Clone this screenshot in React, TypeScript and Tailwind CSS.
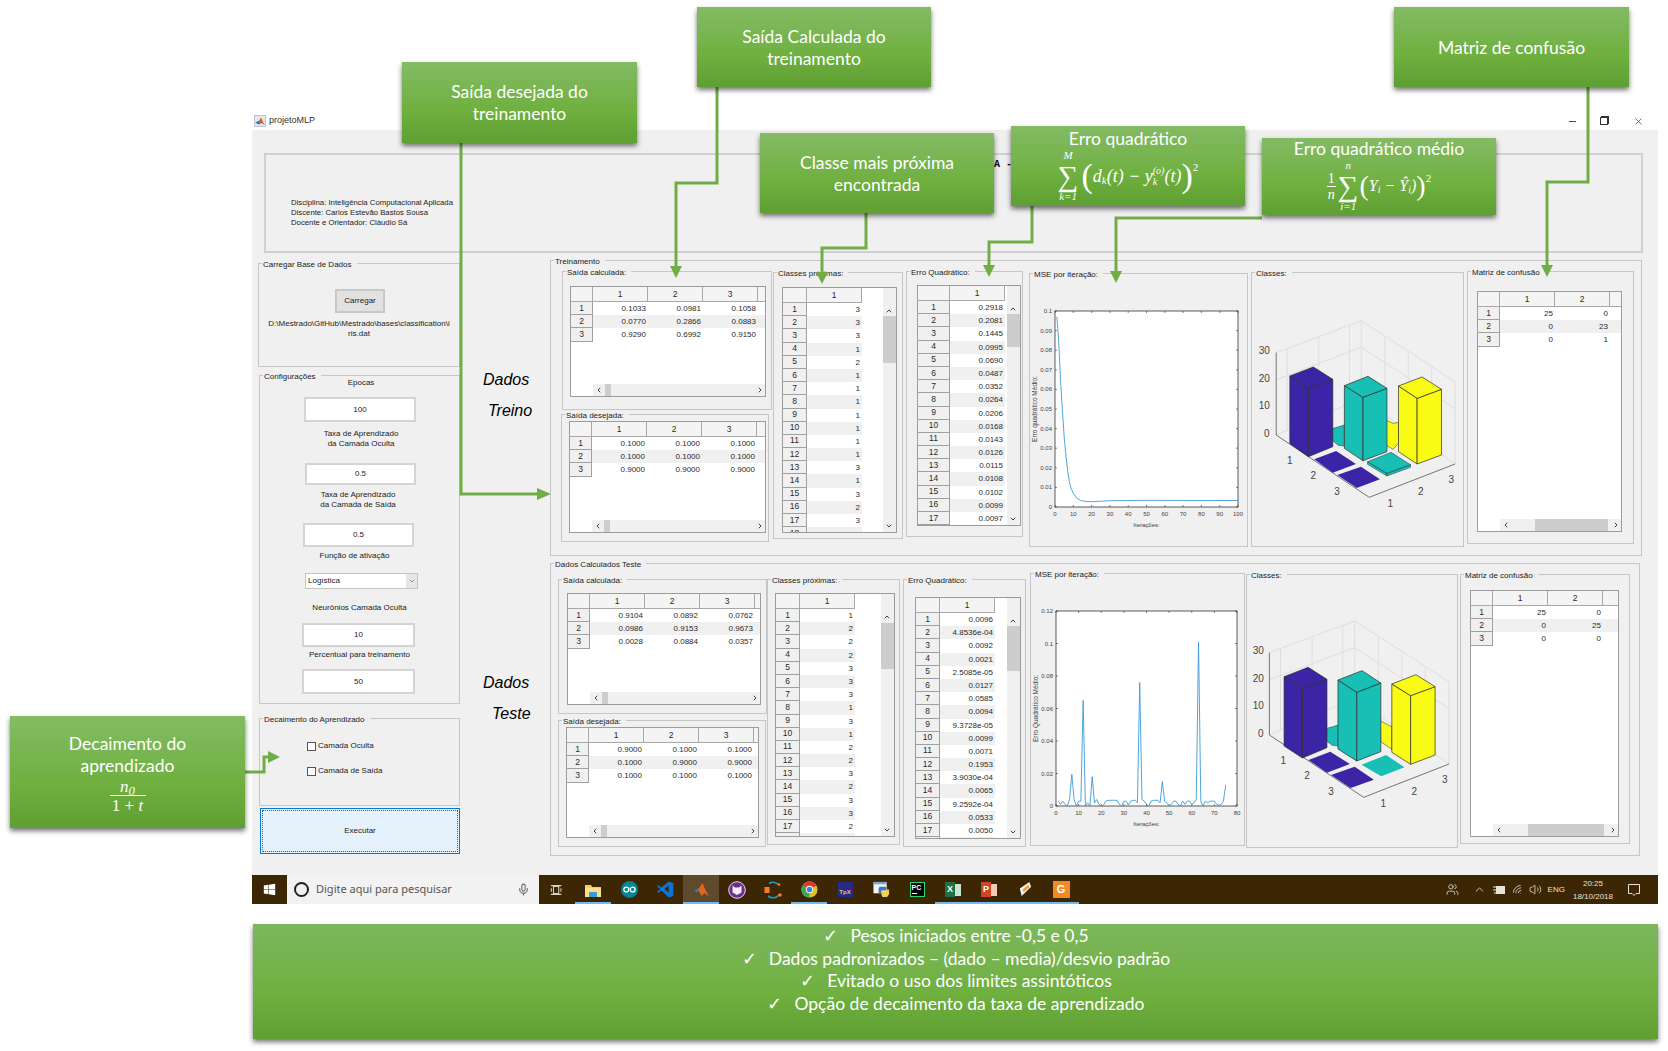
import type { ReactNode } from 'react';
import { ChevronDown, ChevronLeft, ChevronRight, ChevronUp, Mic, Minus, Users, Volume2, Wifi, X } from 'lucide-react';
import { FaWindows } from 'react-icons/fa';

function Group({ title, className = '', children }: { title: string; className?: string; children?: ReactNode }) {
  return (
    <div className={`relative shrink-0 border border-[#c6c6c6] ${className}`}>
      <span className="absolute -top-[4px] left-[3px] bg-[#f0f0f0] pl-px pr-[5px] text-[8px] leading-[10px] whitespace-nowrap text-[#222]">
        {title}
      </span>
      {children}
    </div>
  );
}

type TableProps = {
  className: string;
  headWidth: number;
  cols: number;
  rows: string[][];
  hThumb?: [number, number];
  vThumb?: [number, number];
};

function DataTable({ className, headWidth, cols, rows, hThumb, vThumb }: TableProps) {
  return (
    <div className={`relative overflow-hidden border border-[#9c9c9c] bg-white text-[8px] text-[#2a2a2a] ${className}`}>
      <div className="flex h-[15px] text-[8.5px]">
        <div className="shrink-0 border-r border-b border-[#a8a8a8] bg-[#f4f4f4]" style={{ width: headWidth }} />
        {Array.from({ length: cols }, (_, i) => (
          <div key={i} className="flex w-[55px] shrink-0 items-center justify-center border-r border-b border-[#a8a8a8] bg-[#f4f4f4]">
            {i + 1}
          </div>
        ))}
        {!vThumb && <div className="flex-1 border-b border-[#a8a8a8] bg-[#f4f4f4]" />}
      </div>
      {rows.map((row, r) => (
        <div key={r} className={`flex h-[13.2px] leading-[13px] ${r % 2 === 1 && !vThumb ? 'bg-[#f0f0f0]' : ''}`}>
          <div
            className="flex shrink-0 items-center justify-center border-r border-b border-[#a0a0a0] bg-[#f0f0f0] text-[8.5px]"
            style={{ width: headWidth }}
          >
            {r + 1}
          </div>
          {row.map((v, c) => (
            <div key={c} className={`w-[55px] shrink-0 pr-[2px] text-right ${r % 2 === 1 ? 'bg-[#f0f0f0]' : ''}`}>
              {v}
            </div>
          ))}
        </div>
      ))}
      {hThumb && (
        <div className="absolute right-0 bottom-0 flex h-[12px] items-center bg-[#f0f0f0]" style={{ left: headWidth }}>
          <ChevronLeft className="absolute left-[2px] size-[8px] text-[#444]" strokeWidth={3} />
          <div className="absolute inset-y-0 bg-[#cdcdcd]" style={{ left: hThumb[0], width: hThumb[1] }} />
          <ChevronRight className="absolute right-[1px] size-[8px] text-[#444]" strokeWidth={3} />
        </div>
      )}
      {vThumb && (
        <div className="absolute top-0 right-0 bottom-0 w-[13px] bg-[#f0f0f0]">
          <ChevronUp className="absolute top-[19px] left-[2px] size-[8px] text-[#444]" strokeWidth={3} />
          <div className="absolute inset-x-0 bg-[#cdcdcd]" style={{ top: vThumb[0], height: vThumb[1] }} />
          <ChevronDown className="absolute bottom-[2px] left-[2px] size-[8px] text-[#444]" strokeWidth={3} />
        </div>
      )}
    </div>
  );
}

function Value({ value, className }: { value: string; className: string }) {
  return (
    <div className={`flex items-center justify-center border-2 border-[#d4d4d4] bg-white text-[8px] text-[#222] ${className}`}>
      {value}
    </div>
  );
}

function Label({ children, className = '' }: { children: ReactNode; className?: string }) {
  return <div className={`text-center text-[8px] leading-[10px] text-[#222] ${className}`}>{children}</div>;
}

type PlotProps = {
  box: [number, number, number, number];
  xMax: number;
  yMax: number;
  yStep: number;
  data: [number, number][];
  title: string;
};

function Plot({ box, xMax, yMax, yStep, data, title }: PlotProps) {
  const [x0, x1, y0, y1] = box;
  const px = (v: number) => x0 + (v / xMax) * (x1 - x0);
  const py = (v: number) => y1 - (v / yMax) * (y1 - y0);
  const xTicks: number[] = [];
  for (let v = 0; v <= xMax + 0.001; v += 10) xTicks.push(v);
  const yTicks: number[] = [];
  for (let i = 0; i <= Math.round(yMax / yStep); i++) yTicks.push(i * yStep);
  return (
    <svg className="block h-full w-full" fill="#444" fontSize="6">
      <rect x={x0} y={y0} width={x1 - x0} height={y1 - y0} fill="#fff" stroke="#333" strokeWidth="0.8" />
      {xTicks.map((v) => (
        <g key={v}>
          <path d={`M${px(v)} ${y1}v-2M${px(v)} ${y0}v2`} stroke="#333" strokeWidth="0.6" />
          <text x={px(v)} y={y1 + 9} textAnchor="middle">
            {v}
          </text>
        </g>
      ))}
      {yTicks.map((v) => (
        <g key={v}>
          <path d={`M${x0} ${py(v)}h2M${x1} ${py(v)}h-2`} stroke="#333" strokeWidth="0.6" />
          <text x={x0 - 3} y={py(v) + 2} textAnchor="end">
            {Number(v.toFixed(2)).toString()}
          </text>
        </g>
      ))}
      <polyline
        points={data.map(([a, b]) => `${px(a)},${py(b)}`).join(' ')}
        fill="none"
        stroke="#3d9ad8"
        strokeWidth="0.9"
      />
      <text x={(x0 + x1) / 2} y={y1 + 20} textAnchor="middle">
        Iterações:
      </text>
      <text transform={`translate(7 ${(y0 + y1) / 2}) rotate(-90)`} textAnchor="middle" fontSize="6.5">
        {title}
      </text>
    </svg>
  );
}

type BarDef = { color: string; top: number[]; low: number[] };
type ChartProps = {
  sx: number;
  ox: number;
  oy: number;
  corners: number[];
  behind: { color: string; pts: number[] }[];
  flats: { color: string; pts: number[]; side?: number }[];
  bars: BarDef[];
  labels: [string, number, number][];
};

// the numbers are read off the 3x crops, then scaled back down
function BarChart({ sx, ox, oy, corners, behind, flats, bars, labels }: ChartProps) {
  const mapPts = (p: number[]) => {
    const out: string[] = [];
    for (let i = 0; i < p.length; i += 2) out.push(`${p[i] / sx + ox},${p[i + 1] / 3 + oy}`);
    return out.join(' ');
  };
  const [lx, ly, bx, by, rx, ry] = corners;
  const step = 83;
  const grid = '#dedede';
  const stroke = '#2c2c2c';
  const wallX = [0.13, 0.5, 0.86];
  return (
    <svg className="block h-full w-full" fontSize="10" fill="#444">
      <polyline points={mapPts([lx, ly - 3 * step + 2, bx, by, rx, ry])} fill="none" stroke={grid} />
      <polyline points={mapPts([lx, ly - 2 * step, bx, by + 80, rx, ry + 80])} fill="none" stroke={grid} />
      <polyline points={mapPts([lx, ly, bx, by + 233, rx, ry + 247])} fill="none" stroke={grid} />
      {wallX.map((t) => (
        <polyline
          key={t}
          points={mapPts([lx + (bx - lx) * t, ly - 3 * step + 2 + (by - ly + 3 * step - 2) * t, lx + (bx - lx) * t, ly + (by + 233 - ly) * t])}
          stroke={grid}
        />
      ))}
      {[0.25, 0.5, 0.75].map((t) => (
        <polyline
          key={t}
          points={mapPts([bx + (rx - bx) * t, by + (ry - by) * t, bx + (rx - bx) * t, by + 233 + (ry + 14 - by) * t])}
          stroke={grid}
        />
      ))}
      <polyline points={mapPts([bx, by, bx, by + 233])} stroke={grid} />
      <polyline points={mapPts([rx, ry, rx, ry + 247])} stroke={grid} />
      <polyline
        points={mapPts([lx, ly - 3 * step + 2, lx, ly, corners[6], corners[7], rx, ry + 247])}
        fill="none"
        stroke="#555"
        strokeWidth="0.8"
      />
      {behind.map((b, i) => (
        <polygon key={i} points={mapPts(b.pts)} fill={b.color} stroke={stroke} strokeWidth="0.5" />
      ))}
      {flats.map((f, i) => (
        <g key={i}>
          {f.side && (
            <>
              <polygon
                points={mapPts([f.pts[0], f.pts[1], f.pts[6], f.pts[7], f.pts[6], f.pts[7] + f.side, f.pts[0], f.pts[1] + f.side])}
                fill={f.color}
                stroke={stroke}
                strokeWidth="0.5"
              />
              <polygon
                points={mapPts([f.pts[6], f.pts[7], f.pts[4], f.pts[5], f.pts[4], f.pts[5] + f.side, f.pts[6], f.pts[7] + f.side])}
                fill={f.color}
                stroke={stroke}
                strokeWidth="0.5"
              />
            </>
          )}
          <polygon points={mapPts(f.pts)} fill={f.color} stroke={f.side ? stroke : 'none'} strokeWidth="0.5" />
        </g>
      ))}
      {bars.map((b, i) => {
        const [ax, ay, bbx, bby, cx, cy, dx, dy] = b.top;
        const [e, f, g, h, j, k] = b.low;
        return (
          <g key={i} fill={b.color} stroke={stroke} strokeWidth="0.7" strokeLinejoin="round">
            <polygon points={mapPts([ax, ay, dx, dy, g, h, e, f])} />
            <polygon points={mapPts([dx, dy, cx, cy, j, k, g, h])} />
            <polygon points={mapPts([ax, ay, bbx, bby, cx, cy, dx, dy])} />
          </g>
        );
      })}
      {labels.map(([t, x, y], i) => (
        <text key={i} x={x / sx + ox} y={y / 3 + oy + 3.5} textAnchor="middle">
          {t}
        </text>
      ))}
    </svg>
  );
}

function Callout({ className, children }: { className: string; children: ReactNode }) {
  return (
    <div
      className={`absolute z-30 flex flex-col items-center bg-linear-to-b from-[#84bb64] via-[#6fb03f] via-60% to-[#5f9f33] text-center font-['Lato',sans-serif] text-[17.5px] leading-[22px] text-white shadow-[0_3px_5px_rgba(0,0,0,0.55)] ${className}`}
    >
      {children}
    </div>
  );
}

function Sum({ top, bottom }: { top: string; bottom: string }) {
  return (
    <span className="flex flex-col items-center font-['Liberation_Serif',serif] italic">
      <span className="h-[11px] text-[11px] leading-[10px]">{top}</span>
      <span className="flex h-[30px] items-center text-[29px] leading-none not-italic">∑</span>
      <span className="h-[11px] text-[11px] leading-[11px]">{bottom}</span>
    </span>
  );
}

function Arrows() {
  const lines = [
    '461,143 461,494 538,494',
    '717,87 717,183 676,183 676,267',
    '866,213 866,248 822,248 822,272',
    '1032,206 1032,242 989,242 989,266',
    '1262,218 1116,218 1116,272',
    '1588,87 1588,182 1547,182 1547,266',
    '245,772 264,772 264,757 269,757',
  ];
  const heads = [
    '537,488 551,494 537,500',
    '670,266 682,266 676,278',
    '816,272 828,272 822,284',
    '983,265 995,265 989,277',
    '1110,271 1122,271 1116,283',
    '1541,265 1553,265 1547,277',
    '268,751 280,757 268,763',
  ];
  return (
    <svg className="pointer-events-none absolute inset-0 z-20 h-full w-full">
      {lines.map((p) => (
        <polyline key={p} points={p} fill="none" stroke="#70ad47" strokeWidth="3" />
      ))}
      {heads.map((p) => (
        <polygon key={p} points={p} fill="#70ad47" />
      ))}
    </svg>
  );
}

function TitleIcon() {
  return (
    <svg viewBox="0 0 12 12" className="size-[12px]">
      <rect x="0.5" y="0.5" width="11" height="11" fill="#dfe7f2" stroke="#9aa6b8" strokeWidth="0.6" />
      <path d="M1.5 7.5 5 6 7 2.5 9 7 10.5 10 7.5 8 5 9.5Z" fill="#d4601d" />
      <path d="M1.5 7.5 5 6 5 9.5Z" fill="#2f6fb5" />
    </svg>
  );
}

function TrayIcons() {
  return (
    <div className="ml-auto flex h-full items-center pr-[17px] text-[#e8e2d8]">
      <Users className="mr-[14px] size-[13px]" strokeWidth={1.5} />
      <ChevronUp className="mr-[6px] size-[13px]" strokeWidth={1.5} />
      <svg viewBox="0 0 14 10" className="mr-[6px] h-[10px] w-[14px]" fill="none" stroke="currentColor">
        <rect x="4.5" y="1.5" width="8" height="7" fill="currentColor" />
        <path d="M1 2h3M1 5h3M2 8h2" />
      </svg>
      <Wifi className="mr-[5px] size-[12px] -rotate-45" strokeWidth={1.5} />
      <Volume2 className="mr-[6px] size-[13px]" strokeWidth={1.5} />
      <span className="mr-[8px] text-[8px]">ENG</span>
      <div className="mr-[14px] flex flex-col items-center text-[8px] leading-[13px]">
        <span>20:25</span>
        <span>18/10/2018</span>
      </div>
      <svg viewBox="0 0 14 14" className="size-[14px]" fill="none" stroke="currentColor">
        <path d="M1.5 1.5h11v9H9L7 12.5 5 10.5H1.5Z" />
      </svg>
    </div>
  );
}

const taskIcons: { key: string; on?: boolean; active?: boolean; icon: ReactNode }[] = [
  {
    key: 'view',
    icon: (
      <svg viewBox="0 0 16 16" className="size-[14px]" fill="none" stroke="#d8d2c6" strokeWidth="1.2">
        <rect x="4" y="4" width="6" height="8" />
        <path d="M1 3h12M1 13h12M1.5 6v4M12.5 6v4" />
      </svg>
    ),
  },
  {
    key: 'folder',
    on: true,
    icon: (
      <svg viewBox="0 0 16 16" className="size-[16px]">
        <path d="M0 3h6l1 2h9v10H0Z" fill="#f5cf64" />
        <path d="M0 6h16v9H0Z" fill="#fbe08a" />
        <path d="M4 10h8v5H4Z" fill="#3b9bd8" />
      </svg>
    ),
  },
  {
    key: 'arduino',
    icon: (
      <svg viewBox="0 0 16 16" className="size-[17px]">
        <circle cx="8" cy="8" r="8" fill="#00879a" />
        <circle cx="5" cy="8" r="2.3" fill="none" stroke="#fff" strokeWidth="1.2" />
        <circle cx="11" cy="8" r="2.3" fill="none" stroke="#fff" strokeWidth="1.2" />
      </svg>
    ),
  },
  {
    key: 'vscode',
    icon: (
      <svg viewBox="0 0 16 16" className="size-[17px]">
        <path d="M11 0.5 15.5 2v12L11 15.5 4 9l-2.5 2L0 10l3-2.5L0 5l1.5-1L4 6ZM11 4.5 7 7.5l4 3Z" fill="#0a74d1" />
      </svg>
    ),
  },
  {
    key: 'matlab',
    on: true,
    active: true,
    icon: (
      <svg viewBox="0 0 16 16" className="size-[15px]">
        <path d="M0 9 5 7 9 1l4 9 3 5-5-3-3 3-3-6Z" fill="#e2651e" />
        <path d="M0 9 5 7 5 9.5 3 11Z" fill="#2f7fc4" />
      </svg>
    ),
  },
  {
    key: 'cat',
    icon: (
      <svg viewBox="0 0 18 18" className="size-[18px]">
        <circle cx="9" cy="9" r="8.3" fill="#6c2d91" stroke="#e4dcea" strokeWidth="1" />
        <path d="M4.5 4.5 7 6.5h4l2.5-2v7L9 14l-4.5-2.5Z" fill="#f2ecf6" />
      </svg>
    ),
  },
  {
    key: 'ring',
    icon: (
      <svg viewBox="0 0 18 18" className="size-[18px]">
        <path d="M5 2.5A8 8 0 0 1 15 4M15 14A8 8 0 0 1 4 15" fill="none" stroke="#18a2c9" strokeWidth="1.6" />
        <rect x="0.5" y="6" width="5" height="6" fill="#f27d21" />
        <circle cx="16" cy="14" r="1.8" fill="#f27d21" />
        <circle cx="15" cy="3.5" r="1.3" fill="#f27d21" />
      </svg>
    ),
  },
  {
    key: 'chrome',
    on: true,
    icon: (
      <svg viewBox="0 0 18 18" className="size-[17px]">
        <circle cx="9" cy="9" r="8.5" fill="#e2c21c" />
        <path d="M9 9 1.6 4.7A8.5 8.5 0 0 1 16.4 4.7Z" fill="#d93a2f" />
        <path d="M9 9 1.6 4.7A8.5 8.5 0 0 0 9 17.5Z" fill="#3aa655" />
        <circle cx="9" cy="9" r="3.9" fill="#fff" />
        <circle cx="9" cy="9" r="3" fill="#3d7fe0" />
      </svg>
    ),
  },
  {
    key: 'tex',
    icon: (
      <div className="flex size-[15px] items-end justify-center bg-[#262a86] text-[6px] leading-[9px] font-bold text-[#e6c94e]">TpX</div>
    ),
  },
  {
    key: 'python',
    icon: (
      <svg viewBox="0 0 18 18" className="size-[17px]">
        <rect x="0.5" y="1" width="14" height="12" fill="#f4f4f4" />
        <rect x="0.5" y="1" width="14" height="2.5" fill="#7ba7d8" />
        <path d="M7 6h7v4H9v3H6V8Z" fill="#3b78ad" />
        <path d="M9 11h5V9h3v5l-2 3h-5l-1-2Z" fill="#f4cf45" />
      </svg>
    ),
  },
  {
    key: 'pycharm',
    icon: (
      <div className="flex size-[15px] flex-col border border-[#2dd47f] bg-black text-[7px] leading-[9px] font-bold text-white">
        <span className="pl-px">PC</span>
        <span className="mt-px ml-px h-px w-[5px] bg-white" />
      </div>
    ),
  },
  {
    key: 'excel',
    on: true,
    icon: (
      <div className="flex h-[15px] w-[16px] items-center">
        <span className="flex h-[15px] w-[10px] items-center justify-center bg-[#1d7245] text-[9px] font-bold text-white">X</span>
        <span className="h-[12px] w-[6px] bg-[#c9e3d4]" />
      </div>
    ),
  },
  {
    key: 'ppt',
    on: true,
    icon: (
      <div className="flex h-[15px] w-[16px] items-center">
        <span className="flex h-[15px] w-[10px] items-center justify-center bg-[#cf4526] text-[9px] font-bold text-white">P</span>
        <span className="h-[12px] w-[6px] bg-[#f3c9bb]" />
      </div>
    ),
  },
  {
    key: 'subl',
    on: true,
    icon: (
      <svg viewBox="0 0 18 18" className="size-[17px]">
        <path d="M3 8 13 1l2 5L5 16Z" fill="#f4f4f4" />
        <path d="M6 9l6-5 1 3-6 5Z" fill="#f29b32" />
      </svg>
    ),
  },
  {
    key: 'pdf',
    on: true,
    icon: (
      <div className="flex size-[17px] items-center justify-center bg-[#f08a24] text-[11px] leading-none font-bold text-white">G</div>
    ),
  },
];

function Taskbar() {
  return (
    <div className="flex h-[29px] bg-[#3c2603]">
      <div className="flex w-[35px] items-center justify-center">
        <FaWindows className="size-[13px] text-white" />
      </div>
      <div className="flex w-[252px] items-center bg-[#f2f2f2] font-['Noto_Sans',sans-serif] text-[11px] text-[#555]">
        <span className="ml-[7px] size-[15px] rounded-full border-[2.5px] border-[#222]" />
        <span className="ml-[7px]">Digite aqui para pesquisar</span>
        <Mic className="mr-[9px] ml-auto size-[13px] text-[#666]" />
      </div>
      {taskIcons.map((t) => (
        <div
          key={t.key}
          className={`flex w-[36px] items-center justify-center border-b-2 pt-[2px] ${t.on ? 'border-[#76b9ed]' : 'border-transparent'} ${t.active ? 'bg-[#5f4a2e]' : ''}`}
        >
          {t.icon}
        </div>
      ))}
      <TrayIcons />
    </div>
  );
}

const trainRows = {
  calc: [['0.1033', '0.0981', '0.1058'], ['0.0770', '0.2866', '0.0883'], ['0.9290', '0.6992', '0.9150']],
  want: [['0.1000', '0.1000', '0.1000'], ['0.1000', '0.1000', '0.1000'], ['0.9000', '0.9000', '0.9000']],
  classes: '3 3 3 1 2 1 1 1 1 1 1 1 3 1 3 2 3'.split(' ').map((v) => [v]),
  err: '0.2918 0.2081 0.1445 0.0995 0.0690 0.0487 0.0352 0.0264 0.0206 0.0168 0.0143 0.0126 0.0115 0.0108 0.0102 0.0099 0.0097'
    .split(' ')
    .map((v) => [v]),
  conf: [['25', '0'], ['0', '23'], ['0', '1']],
};

const testRows = {
  calc: [['0.9104', '0.0892', '0.0762'], ['0.0986', '0.9153', '0.9673'], ['0.0028', '0.0884', '0.0357']],
  want: [['0.9000', '0.1000', '0.1000'], ['0.1000', '0.9000', '0.9000'], ['0.1000', '0.1000', '0.1000']],
  classes: '1 2 2 2 3 3 3 1 3 1 2 2 3 2 3 3 2'.split(' ').map((v) => [v]),
  err: '0.0096 4.8536e-04 0.0092 0.0021 2.5085e-05 0.0127 0.0585 0.0094 9.3728e-05 0.0099 0.0071 0.1953 3.9030e-04 0.0065 9.2592e-04 0.0533 0.0050'
    .split(' ')
    .map((v) => [v]),
  conf: [['25', '0'], ['0', '25'], ['0', '0']],
};

const extraRow = (rows: string[][]) => [...rows, ['']];

const trainCurve: [number, number][] = [
  [1, 0.097], [2, 0.085], [3, 0.065], [4, 0.05], [5, 0.036], [6, 0.026], [7, 0.018], [8, 0.012], [9, 0.009],
  [10, 0.007], [12, 0.0045], [14, 0.0033], [17, 0.0028], [20, 0.0027], [30, 0.0032], [50, 0.0034], [100, 0.0033],
];

const testCurve: [number, number][] = [
  0.003, 0.001, 0.003, 0.001, 0, 0.004, 0.0195, 0.004, 0, 0.003, 0.003, 0.065, 0, 0.002, 0, 0.018, 0.002, 0.004, 0.001, 0,
  0.0005, 0.003, 0.0035, 0.0035, 0.0035, 0.0035, 0.0035, 0.001, 0, 0.003, 0.003, 0.0005, 0.003, 0.0035, 0.0035, 0.002, 0.076,
  0.004, 0.003, 0.001, 0, 0.003, 0.0035, 0.0035, 0.0035, 0.002, 0.015, 0.003, 0.002, 0, 0.001, 0.003, 0.003, 0.001, 0, 0.003,
  0.001, 0.003, 0.003, 0.001, 0.002, 0.004, 0.101, 0.003, 0, 0.003, 0.002, 0.003, 0.003, 0.003, 0.001, 0.0005, 0.001, 0.003, 0.013,
].map((v, i) => [i + 1, v] as [number, number]);

const BLUE = '#3b25a6';
const TEAL = '#17bfb4';
const YELLOW = '#f9fb15';

const trainChart: ChartProps = {
  sx: 2.42,
  ox: -232,
  oy: -13,
  corners: [620, 525, 826, 182, 1053, 365, 845, 712],
  behind: [
    { color: TEAL, pts: [745, 510, 785, 495, 785, 558, 770, 556, 745, 530] },
    { color: YELLOW, pts: [885, 480, 903, 490, 916, 487, 916, 550, 903, 568, 885, 555] },
  ],
  flats: [
    { color: BLUE, pts: [712, 598, 765, 573, 813, 612, 757, 638] },
    { color: BLUE, pts: [768, 645, 825, 620, 871, 658, 815, 684] },
    { color: TEAL, pts: [841, 605, 898, 577, 945, 614, 888, 640], side: 8 },
  ],
  bars: [
    { color: BLUE, top: [653, 348, 710, 321, 757, 358, 698, 385], low: [653, 551, 698, 590, 757, 560] },
    { color: TEAL, top: [785, 377, 842, 349, 888, 385, 830, 412], low: [785, 565, 830, 602, 888, 575] },
    { color: YELLOW, top: [916, 378, 973, 351, 1020, 388, 961, 415], low: [916, 575, 961, 612, 1020, 585] },
  ],
  labels: [
    ['30', 591, 272], ['20', 591, 356], ['10', 591, 437], ['0', 597, 520], ['1', 653, 602], ['2', 710, 647], ['3', 767, 693],
    ['1', 896, 729], ['2', 970, 694], ['3', 1044, 658],
  ],
};

const testChart: ChartProps = {
  sx: 2.45,
  ox: -227,
  oy: -15,
  corners: [611, 525, 820, 183, 1051, 365, 842, 712],
  behind: [
    { color: TEAL, pts: [738, 510, 780, 495, 780, 558, 765, 556, 738, 530] },
    { color: YELLOW, pts: [882, 482, 902, 495, 911, 500, 911, 568, 884, 545] },
  ],
  flats: [
    { color: BLUE, pts: [707, 600, 760, 575, 808, 612, 752, 638] },
    { color: BLUE, pts: [762, 645, 820, 620, 867, 659, 810, 684] },
    { color: TEAL, pts: [837, 614, 897, 585, 942, 622, 885, 649] },
  ],
  bars: [
    { color: BLUE, top: [647, 350, 706, 322, 752, 358, 692, 385], low: [647, 558, 692, 594, 752, 563] },
    { color: TEAL, top: [779, 360, 838, 332, 884, 369, 825, 397], low: [779, 567, 825, 603, 884, 575] },
    { color: YELLOW, top: [911, 372, 970, 344, 1017, 380, 957, 407], low: [911, 577, 957, 613, 1017, 585] },
  ],
  labels: [
    ['30', 584, 272], ['20', 584, 356], ['10', 584, 437], ['0', 590, 520], ['1', 645, 602], ['2', 703, 647], ['3', 762, 693],
    ['1', 890, 729], ['2', 966, 694], ['3', 1041, 658],
  ],
};

function LeftColumn() {
  return (
    <div className="w-[202px] shrink-0">
      <Group title="Carregar Base de Dados" className="mt-[10px] h-[104px] w-[202px]">
        <button className="mt-[25px] ml-[76px] block h-[24px] w-[50px] border-2 border-[#c8c8c8] bg-[#e1e1e1] text-[8px] text-[#222]">
          Carregar
        </button>
        <Label className="mt-[6px] whitespace-nowrap">
          D:\Mestrado\GitHub\Mestrado\bases\classification\i
          <br />
          ris.dat
        </Label>
      </Group>
      <Group title="Configurações" className="mt-[8px] ml-px h-[329px] w-[201px]">
        <Label className="mt-[2px] pl-[3px]">Epocas</Label>
        <Value value="100" className="mt-[9px] ml-[44px] h-[25px] w-[112px]" />
        <Label className="mt-[7px] pl-[3px]">
          Taxa de Aprendizado
          <br />
          da Camada Oculta
        </Label>
        <Value value="0.5" className="mt-[14px] ml-[45px] h-[22px] w-[111px]" />
        <Label className="mt-[5px] pr-[3px]">
          Taxa de Aprendizado
          <br />
          da Camada de Saída
        </Label>
        <Value value="0.5" className="mt-[13px] ml-[43px] h-[24px] w-[111px]" />
        <Label className="mt-[4px] pr-[10px]">Função de ativação</Label>
        <div className="mt-[12px] ml-[45px] flex h-[16px] w-[113px] items-center border border-[#c4c4c4] bg-white pl-[2px] text-[8px] text-[#222]">
          Logística
          <span className="ml-auto flex h-full w-[11px] items-center justify-center bg-[#e6e6e6]">
            <ChevronDown className="size-[8px] text-[#666]" />
          </span>
        </div>
        <Label className="mt-[14px]">Neurônios Camada Oculta</Label>
        <Value value="10" className="mt-[10px] ml-[42px] h-[24px] w-[113px]" />
        <Label className="mt-[3px]">Percentual para treinamento</Label>
        <Value value="50" className="mt-[9px] ml-[42px] h-[25px] w-[113px]" />
      </Group>
      <Group title="Decaimento do Aprendizado" className="mt-[14px] ml-px h-[88px] w-[201px]">
        <div className="mt-[22px] ml-[47px] flex items-center gap-[2px] text-[8px] leading-[10px] text-[#222]">
          <span className="size-[9px] border border-[#555] bg-white" />
          Camada Oculta
        </div>
        <div className="mt-[15px] ml-[47px] flex items-center gap-[2px] text-[8px] leading-[10px] text-[#222]">
          <span className="size-[9px] border border-[#555] bg-white" />
          Camada de Saída
        </div>
      </Group>
      <div className="mt-[2px] ml-[2px] h-[46px] w-[200px] border border-[#0078d7] bg-[#e5f1fb] p-px">
        <div className="flex h-full items-center justify-center border border-dotted border-[#555] text-[8px] text-[#222]">Executar</div>
      </div>
    </div>
  );
}

function SideLabels() {
  return (
    <div className="w-[90px] shrink-0 text-[16px] leading-[20px] text-black italic">
      <div className="mt-[117px] ml-[23px]">Dados</div>
      <div className="mt-[11px] ml-[28px]">Treino</div>
      <div className="mt-[252px] ml-[23px]">Dados</div>
      <div className="mt-[11px] ml-[32px]">Teste</div>
    </div>
  );
}

function TrainPanel() {
  return (
    <Group title="Treinamento" className="mt-[7px] flex h-[296px] w-[1092px] items-start pt-[10px] pl-[10px]">
      <div className="w-[211px] shrink-0">
        <Group title="Saída calculada:" className="ml-px h-[139px] w-[210px]">
          <DataTable className="mt-[14px] ml-[7px] h-[111px] w-[196px]" headWidth={22} cols={3} rows={trainRows.calc} hThumb={[12, 6]} />
        </Group>
        <Group title="Saída desejada:" className="mt-[4px] h-[128px] w-[208px]">
          <DataTable className="mt-[6px] ml-[7px] h-[112px] w-[197px]" headWidth={22} cols={3} rows={trainRows.want} hThumb={[12, 6]} />
        </Group>
      </div>
      <Group title="Classes próximas:" className="mt-px ml-px h-[267px] w-[130px]">
        <DataTable className="mt-[14px] ml-[8px] h-[246px] w-[115px]" headWidth={24} cols={1} rows={extraRow(trainRows.classes)} vThumb={[28, 47]} />
      </Group>
      <Group title="Erro Quadrático:" className="ml-[3px] h-[266px] w-[117px]">
        <DataTable className="mt-[13px] ml-[10px] h-[241px] w-[104px]" headWidth={32} cols={1} rows={extraRow(trainRows.err)} vThumb={[28, 33]} />
      </Group>
      <Group title="MSE por iteração:" className="mt-[2px] ml-[6px] h-[274px] w-[219px]">
        <Plot box={[25, 208, 37, 233]} xMax={100} yMax={0.1} yStep={0.01} data={trainCurve} title="Erro quadrático Médio:" />
      </Group>
      <Group title="Classes:" className="mt-px ml-[3px] h-[275px] w-[213px]">
        <BarChart {...trainChart} />
      </Group>
      <Group title="Matriz de confusão" className="ml-[3px] h-[273px] w-[167px]">
        <DataTable className="mt-[19px] ml-[9px] h-[241px] w-[145px]" headWidth={22} cols={2} rows={trainRows.conf} hThumb={[35, 73]} />
      </Group>
    </Group>
  );
}

function TestPanel() {
  return (
    <Group title="Dados Calculados Teste" className="mt-[7px] flex h-[293px] w-[1090px] items-start pt-[9px] pl-[7px]">
      <div className="mt-[6px] w-[209px] shrink-0">
        <Group title="Saída calculada:" className="h-[135px] w-[209px]">
          <DataTable className="mt-[13px] ml-[8px] h-[112px] w-[194px]" headWidth={22} cols={3} rows={testRows.calc} hThumb={[12, 6]} />
        </Group>
        <Group title="Saída desejada:" className="mt-[6px] h-[127px] w-[208px]">
          <DataTable className="mt-[6px] ml-[7px] h-[111px] w-[193px]" headWidth={22} cols={3} rows={testRows.want} hThumb={[12, 6]} />
        </Group>
      </div>
      <Group title="Classes próximas:" className="mt-[6px] h-[266px] w-[133px]">
        <DataTable className="mt-[13px] ml-[7px] h-[244px] w-[120px]" headWidth={24} cols={1} rows={extraRow(testRows.classes)} vThumb={[29, 46]} />
      </Group>
      <Group title="Erro Quadrático:" className="mt-[6px] ml-[3px] h-[268px] w-[123px]">
        <DataTable className="mt-[17px] ml-[11px] h-[242px] w-[106px]" headWidth={24} cols={1} rows={extraRow(testRows.err)} vThumb={[28, 45]} />
      </Group>
      <Group title="MSE por iteração:" className="ml-[4px] h-[273px] w-[215px]">
        <Plot box={[25, 206, 37, 232]} xMax={80} yMax={0.12} yStep={0.02} data={testCurve} title="Erro Quadrático Médio:" />
      </Group>
      <Group title="Classes:" className="mt-px ml-px h-[274px] w-[212px]">
        <BarChart {...testChart} />
      </Group>
      <Group title="Matriz de confusão" className="mt-px ml-[2px] h-[270px] w-[170px]">
        <DataTable className="mt-[15px] ml-[9px] h-[247px] w-[149px]" headWidth={22} cols={2} rows={testRows.conf} hThumb={[35, 76]} />
      </Group>
    </Group>
  );
}

function MatlabWindow() {
  return (
    <div className="ml-[252px] w-[1406px]">
      <div className="flex h-[30px] items-center pt-[12px] pl-[2px] text-[#333]">
        <TitleIcon />
        <span className="ml-[3px] text-[9px]">projetoMLP</span>
        <Minus className="ml-auto size-[11px]" />
        <span className="ml-[22px] size-[8px] border border-[#333] shadow-[1px_-1px_0_0_#333]" />
        <X className="mr-[14px] ml-[25px] size-[11px]" strokeWidth={1.5} />
      </div>
      <div className="h-[745px] bg-[#f0f0f0]">
        <div className="relative ml-[12px] h-[100px] w-[1379px] translate-y-[23px] border-2 border-[#d0d0d0] pt-[43px] pl-[25px] text-[7.75px] leading-[10px] text-[#222]">
          <span className="absolute top-[4px] left-[728px] font-['Liberation_Mono',monospace] text-[10px] leading-[12px] font-bold whitespace-nowrap text-black">
            A -
          </span>
          <div>Disciplina: Inteligência Computacional Aplicada</div>
          <div>Discente: Carlos Estevão Bastos Sousa</div>
          <div>Docente e Orientador: Cláudio Sá</div>
        </div>
        <div className="mt-[23px] ml-[6px] flex">
          <LeftColumn />
          <SideLabels />
          <div className="shrink-0">
            <TrainPanel />
            <TestPanel />
          </div>
        </div>
      </div>
      <Taskbar />
    </div>
  );
}

export default function App() {
  const bullets = [
    'Pesos iniciados entre -0,5 e 0,5',
    'Dados padronizados – (dado – media)/desvio padrão',
    'Evitado o uso dos limites assintóticos',
    'Opção de decaimento da taxa de aprendizado',
  ];
  return (
    <div className="relative h-[1051px] w-[1668px] overflow-hidden bg-white pt-[100px] font-['Liberation_Sans',sans-serif]">
      <MatlabWindow />

      <div className="mt-[20px] ml-[253px] flex h-[115px] w-[1405px] flex-col items-center bg-linear-to-b from-[#7db75c] via-[#6fb03f] via-60% to-[#5f9f33] pt-px font-['Lato',sans-serif] text-[17.5px] leading-[22.5px] text-white shadow-[0_3px_5px_rgba(0,0,0,0.55)]">
        {bullets.map((b) => (
          <div key={b} className="flex">
            <span className="mr-[11px] w-[17px] text-center">✓</span>
            {b}
          </div>
        ))}
      </div>

      <Arrows />

      <Callout className="top-[62px] left-[402px] h-[81px] w-[235px] justify-center">
        Saída desejada do
        <br />
        treinamento
      </Callout>
      <Callout className="top-[7px] left-[697px] h-[80px] w-[234px] justify-center pt-[2px]">
        Saída Calculada do
        <br />
        treinamento
      </Callout>
      <Callout className="top-[133px] left-[760px] h-[80px] w-[234px] justify-center pt-[2px]">
        Classe mais próxima
        <br />
        encontrada
      </Callout>
      <Callout className="top-[126px] left-[1011px] h-[80px] w-[234px] pt-[2px]">
        Erro quadrático
        <span className="flex items-center font-['Liberation_Serif',serif] text-[18px] leading-none italic">
          <Sum top="M" bottom="k=1" />
          <span className="ml-[3px] text-[34px] font-light not-italic">(</span>
          <span className="flex items-center">
            d<span className="mt-[9px] text-[11px]">k</span>
            (t) − y
            <span className="flex flex-col items-start text-[10px] leading-[11px]">
              <span>(o)</span>
              <span>k</span>
            </span>
            (t)
          </span>
          <span className="text-[34px] font-light not-italic">)</span>
          <span className="-mt-[18px] text-[11px] not-italic">2</span>
        </span>
      </Callout>
      <Callout className="top-[138px] left-[1262px] h-[77px] w-[234px]">
        Erro quadrático médio
        <span className="flex items-center font-['Liberation_Serif',serif] text-[16px] leading-none italic">
          <span className="mr-[2px] flex w-[9px] flex-col items-center text-[14px] leading-[15px]">
            <span className="w-full border-b border-white text-center not-italic">1</span>
            <span>n</span>
          </span>
          <Sum top="n" bottom="i=1" />
          <span className="ml-[1px] text-[28px] font-light not-italic">(</span>
          <span className="flex items-center">
            Y<span className="mt-[8px] text-[10px]">i</span>
            &nbsp;− Ŷ<span className="mt-[8px] text-[10px]">i</span>)
          </span>
          <span className="text-[28px] font-light not-italic">)</span>
          <span className="-mt-[16px] text-[11px] not-italic">2</span>
        </span>
      </Callout>
      <Callout className="top-[7px] left-[1394px] h-[80px] w-[235px] justify-center pt-[2px]">Matriz de confusão</Callout>
      <Callout className="top-[716px] left-[10px] h-[112px] w-[235px] pt-[17px]">
        Decaimento do
        <br />
        aprendizado
        <span className="flex w-[36px] flex-col items-center font-['Liberation_Serif',serif] text-[17px] leading-[19px]">
          <span className="h-[19px] w-full border-b border-white italic">
            n<sub>0</sub>
          </span>
          <span>
            1 + <i>t</i>
          </span>
        </span>
      </Callout>
    </div>
  );
}
